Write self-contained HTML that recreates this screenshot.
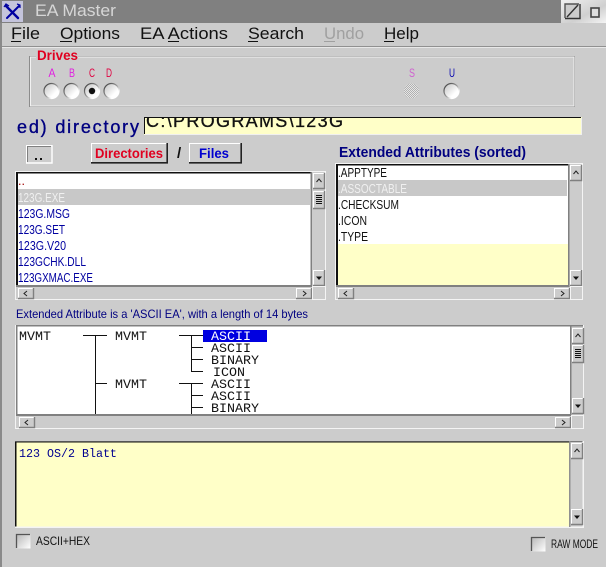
<!DOCTYPE html>
<html><head><meta charset="utf-8"><title>EA Master</title>
<style>
html,body{margin:0;padding:0;background:#ccc;width:606px;height:567px;overflow:hidden}
svg{display:block}
text{font-family:"Liberation Sans",sans-serif;white-space:pre}
text.m,.m text{font-family:"Liberation Mono",monospace}
</style></head><body>
<svg xmlns="http://www.w3.org/2000/svg" width="606" height="567" viewBox="0 0 606 567">
<defs>
<linearGradient id="r" x1="0" y1="0" x2="1" y2="1"><stop offset="0" stop-color="#c0c0c0"/><stop offset=".7" stop-color="#fff"/><stop offset="1" stop-color="#fff"/></linearGradient>
<linearGradient id="ring" x1="0" y1="0" x2="1" y2="1"><stop offset="0" stop-color="#333"/><stop offset=".5" stop-color="#999"/><stop offset=".75" stop-color="#fff"/><stop offset="1" stop-color="#fff"/></linearGradient>
<linearGradient id="ck" x1="0" y1="0" x2="1" y2="1"><stop offset="0" stop-color="#b8b8b8"/><stop offset="1" stop-color="#fff"/></linearGradient>
<linearGradient id="tb" x1="0" y1="0" x2="1" y2="1"><stop offset="0" stop-color="#f0f0f0"/><stop offset=".6" stop-color="#d0d0d0"/><stop offset="1" stop-color="#f4f4f4"/></linearGradient>
<pattern id="hat" width="2" height="2" patternUnits="userSpaceOnUse"><rect width="2" height="2" fill="#e6e6e6"/><rect width="1" height="1" fill="#b0b0b0"/><rect x="1" y="1" width="1" height="1" fill="#b0b0b0"/></pattern>
<g id="rad"><circle r="7.5" fill="url(#r)" stroke="url(#ring)" stroke-width="1.2"/></g>
<g id="up"><rect x="0" y="0" width="12" height="16" fill="#ccc"/><path d="M.5 16V.5H12" fill="none" stroke="#fff"/><path d="M0 15.5H11.5V0" fill="none" stroke="#808080" stroke-width="1.4"/><path d="M3.5 9l2.5-3 2.5 3" fill="none" stroke="#222"/></g>
<g id="down"><rect x="0" y="0" width="12" height="16" fill="#ccc"/><path d="M.5 16V.5H12" fill="none" stroke="#fff"/><path d="M0 15.5H11.5V0" fill="none" stroke="#808080" stroke-width="1.4"/><path d="M3 6.5h6l-3 3.5z" fill="#111"/></g>
<g id="lft"><rect width="16" height="11" fill="#ccc"/><path d="M.5 11V.5H16" fill="none" stroke="#fff"/><path d="M0 10.5H15.5V0" fill="none" stroke="#808080" stroke-width="1.4"/><path d="M9 3L6 5.5 9 8" fill="none" stroke="#222"/></g>
<g id="rgt"><rect width="16" height="11" fill="#ccc"/><path d="M.5 11V.5H16" fill="none" stroke="#fff"/><path d="M0 10.5H15.5V0" fill="none" stroke="#808080" stroke-width="1.4"/><path d="M7 3l3 2.5L7 8" fill="none" stroke="#222"/></g>
<g id="thumb"><rect width="12" height="18" fill="#ccc"/><path d="M.5 18V.5H12" fill="none" stroke="#fff"/><path d="M0 17.5H11.5V0" fill="none" stroke="#808080" stroke-width="1.4"/><path d="M3 4.5h6M3 6.5h6M3 8.5h6M3 10.5h6M3 12.5h6" stroke="#111"/></g>
</defs>

<rect width="606" height="567" fill="#ccc"/>
<rect width="2" height="567" fill="#8a8a8a"/>

<!-- title bar -->
<rect width="606" height="23" fill="#808080"/>
<rect x="2" y="1" width="21" height="21" fill="#c4c4dc"/>
<path d="M6 6L18 18" stroke="#0000a0" stroke-width="2.4" stroke-linecap="round"/>
<path d="M19 6L7 18" stroke="#0000a0" stroke-width="2" stroke-linecap="round"/>
<path d="M4 7l2-3 3 2M17 4l3 1 0 3" fill="none" stroke="#0000a0" stroke-width="1.2"/>
<text x="35" y="16" font-size="17" fill="#d6d6d6" textLength="81" lengthAdjust="spacingAndGlyphs">EA Master</text>
<rect x="561" y="0" width="45" height="23" fill="url(#tb)"/>
<rect x="565" y="4" width="14" height="14" fill="#ccc"/>
<path d="M565 18V4H579" fill="none" stroke="#555" stroke-width="1.4"/>
<path d="M565 18.5H580V4" fill="none" stroke="#333" stroke-width="1.4"/>
<path d="M567 17L578 5" stroke="#333" stroke-width="1.4"/>
<rect x="591" y="8" width="8" height="9" fill="#ddd" stroke="#444" stroke-width="1.6"/>

<!-- menu -->
<g font-size="17" fill="#111">
<text x="11" y="39" textLength="29" lengthAdjust="spacingAndGlyphs">File</text>
<text x="60" y="39" textLength="60" lengthAdjust="spacingAndGlyphs">Options</text>
<text x="140" y="39" textLength="88" lengthAdjust="spacingAndGlyphs">EA Actions</text>
<text x="248" y="39" textLength="56" lengthAdjust="spacingAndGlyphs">Search</text>
<text x="324" y="39" textLength="40" lengthAdjust="spacingAndGlyphs" fill="#a0a0a0">Undo</text>
<text x="384" y="39" textLength="35" lengthAdjust="spacingAndGlyphs">Help</text>
</g>
<g fill="#111">
<rect x="11" y="41" width="10" height="1"/><rect x="60" y="41" width="12" height="1"/><rect x="168" y="41" width="11" height="1"/><rect x="248" y="41" width="10" height="1"/><rect x="384" y="41" width="10" height="1"/>
<rect x="324" y="41" width="11" height="1" fill="#a0a0a0"/>
</g>
<rect x="2" y="46" width="604" height="1" fill="#909090"/>
<rect x="2" y="47" width="604" height="1" fill="#e8e8e8"/>

<!-- drives -->
<rect x="29.5" y="56.5" width="545" height="50" fill="none" stroke="#8c8c8c"/>
<rect x="30.5" y="57" width="543.5" height="49" fill="none" stroke="#f2f2f2"/>
<rect x="36" y="50" width="42" height="12" fill="#ccc"/>
<text x="37" y="60" font-size="14" font-weight="bold" fill="#e00020" textLength="41" lengthAdjust="spacingAndGlyphs">Drives</text>
<g font-size="12" text-anchor="middle">
<text x="52" y="77" fill="#e020e0" textLength="7" lengthAdjust="spacingAndGlyphs">A</text>
<text x="72" y="77" fill="#e020e0" textLength="6" lengthAdjust="spacingAndGlyphs">B</text>
<text x="92" y="77" fill="#e00040" textLength="6" lengthAdjust="spacingAndGlyphs">C</text>
<text x="109" y="77" fill="#e00040" textLength="6" lengthAdjust="spacingAndGlyphs">D</text>
<text x="412" y="77" fill="#d060d0" textLength="6" lengthAdjust="spacingAndGlyphs">S</text>
<text x="452" y="77" fill="#0000b0" textLength="6" lengthAdjust="spacingAndGlyphs">U</text>
</g>
<use href="#rad" x="51.5" y="91"/><use href="#rad" x="71.5" y="91"/><use href="#rad" x="92" y="91"/><use href="#rad" x="111.5" y="91"/><use href="#rad" x="451.5" y="91"/>
<circle cx="92" cy="91" r="3.2" fill="#111"/>
<circle cx="411.5" cy="91" r="7.5" fill="url(#hat)"/>

<!-- directory -->
<text x="17" y="133" font-size="18" fill="#000080" stroke="#000080" stroke-width=".35" textLength="122" lengthAdjust="spacing">ed) directory</text>
<svg x="144" y="117" width="438" height="18" viewBox="0 0 438 18">
<rect x="0" y="0" width="438" height="18" fill="#ffffc8"/>
<text x="2" y="10" font-size="18" fill="#111" stroke="#111" stroke-width=".3" textLength="197" lengthAdjust="spacing">C:\PROGRAMS\123G</text>
</svg>
<path d="M144.5 134V117.5H581" fill="none" stroke="#111"/>
<path d="M145 134.5H581.5V118" fill="none" stroke="#f0f0f0"/>

<!-- buttons -->
<rect x="26" y="145" width="26" height="18" fill="#ccc"/>
<path d="M26.5 163V145.5H52" fill="none" stroke="#fff"/><path d="M26 163H52V145" fill="none" stroke="#fff" stroke-width="1.4"/>
<path d="M27.5 162V146.5H51" fill="none" stroke="#808080"/>
<rect x="35" y="158" width="2" height="2" fill="#111"/><rect x="40" y="158" width="2" height="2" fill="#111"/>
<rect x="91" y="143" width="76" height="20" fill="#ccc"/>
<path d="M91.5 163V143.5H167" fill="none" stroke="#fff"/><path d="M91 162.8H167.2V143" fill="none" stroke="#222" stroke-width="1.6"/>
<text x="95" y="158" font-size="14" font-weight="bold" fill="#e00020" textLength="68" lengthAdjust="spacingAndGlyphs">Directories</text>
<text x="177" y="158" font-size="15" font-weight="bold" fill="#111">/</text>
<rect x="189" y="143" width="52" height="20" fill="#ccc"/>
<path d="M189.5 163V143.5H241" fill="none" stroke="#fff"/><path d="M189 162.8H241.2V143" fill="none" stroke="#222" stroke-width="1.6"/>
<text x="199" y="158" font-size="14" font-weight="bold" fill="#0000d0" textLength="30" lengthAdjust="spacingAndGlyphs">Files</text>
<text x="339" y="157" font-size="14.5" font-weight="bold" fill="#000080" textLength="187" lengthAdjust="spacingAndGlyphs">Extended Attributes (sorted)</text>

<!-- left list -->
<rect x="15.5" y="171.5" width="310" height="128" fill="#ccc" stroke="#f4f4f4"/>
<rect x="16" y="172" width="296" height="115" fill="#fff"/>
<rect x="16" y="172" width="296" height="1.5" fill="#111"/><rect x="16" y="172" width="2" height="115" fill="#111"/>
<rect x="16" y="285" width="296" height="2" fill="#808080"/><rect x="310.5" y="172" width="1.5" height="115" fill="#808080"/>
<rect x="18" y="189" width="292" height="16" fill="#c8c8c8"/>
<g font-size="12.5" fill="#0000a0">
<text x="18" y="185" fill="#a00000">..</text>
<text x="18" y="202" fill="#f0f0f0" textLength="47" lengthAdjust="spacingAndGlyphs">123G.EXE</text>
<text x="18" y="218" textLength="52" lengthAdjust="spacingAndGlyphs">123G.MSG</text>
<text x="18" y="234" textLength="47" lengthAdjust="spacingAndGlyphs">123G.SET</text>
<text x="18" y="250" textLength="48" lengthAdjust="spacingAndGlyphs">123G.V20</text>
<text x="18" y="266" textLength="68" lengthAdjust="spacingAndGlyphs">123GCHK.DLL</text>
<text x="18" y="282" textLength="75" lengthAdjust="spacingAndGlyphs">123GXMAC.EXE</text>
</g>
<use href="#up" x="313" y="173"/><use href="#thumb" x="313" y="191"/><use href="#down" x="313" y="270"/>
<use href="#lft" x="18" y="288"/><use href="#rgt" x="296" y="288"/>
<rect x="312.5" y="286.5" width="13" height="13" fill="none" stroke="#f4f4f4"/>

<!-- right list -->
<rect x="335.5" y="163.5" width="247" height="136" fill="#ccc" stroke="#f4f4f4"/>
<rect x="336" y="164" width="233" height="123" fill="#fff"/>
<rect x="338" y="244" width="231" height="41" fill="#ffffc8"/>
<rect x="336" y="164" width="233" height="1.5" fill="#111"/><rect x="336" y="164" width="2" height="123" fill="#111"/>
<rect x="336" y="285" width="233" height="2" fill="#808080"/><rect x="568" y="164" width="1.5" height="123" fill="#808080"/>
<rect x="338" y="180" width="229" height="16" fill="#c8c8c8"/>
<g font-size="12.5" fill="#111">
<text x="338" y="177" textLength="49" lengthAdjust="spacingAndGlyphs">.APPTYPE</text>
<text x="338" y="193" fill="#f0f0f0" textLength="69" lengthAdjust="spacingAndGlyphs">.ASSOCTABLE</text>
<text x="338" y="209" textLength="61" lengthAdjust="spacingAndGlyphs">.CHECKSUM</text>
<text x="338" y="225" textLength="29" lengthAdjust="spacingAndGlyphs">.ICON</text>
<text x="338" y="241" textLength="30" lengthAdjust="spacingAndGlyphs">.TYPE</text>
</g>
<use href="#up" x="570" y="165"/><use href="#down" x="570" y="270"/>
<use href="#lft" x="338" y="288"/><use href="#rgt" x="554" y="288"/>
<rect x="570.5" y="286.5" width="12" height="13" fill="none" stroke="#f4f4f4"/>

<!-- info line -->
<text x="16" y="318" font-size="12" fill="#000080" textLength="292" lengthAdjust="spacingAndGlyphs">Extended Attribute is a 'ASCII EA', with a length of 14 bytes</text>

<!-- tree -->
<rect x="15.5" y="325.5" width="568" height="103" fill="#ccc" stroke="#f4f4f4"/>
<rect x="16" y="325" width="555" height="91" fill="#fff"/>
<rect x="16" y="325" width="567" height="1.5" fill="#808080"/><rect x="16" y="325" width="1.5" height="91" fill="#808080"/>
<rect x="16" y="414" width="555" height="2" fill="#808080"/><rect x="570" y="325" width="1.5" height="91" fill="#808080"/>
<rect x="203" y="330" width="64" height="12" fill="#0000e0"/>
<g class="m" font-size="13.33" fill="#111">
<text x="19" y="340">MVMT</text><text x="115" y="340">MVMT</text>
<text x="211" y="340" fill="#fff">ASCII</text>
<text x="211" y="352">ASCII</text><text x="211" y="364">BINARY</text><text x="213" y="376">ICON</text>
<text x="115" y="388">MVMT</text>
<text x="211" y="388">ASCII</text><text x="211" y="400">ASCII</text><text x="211" y="412">BINARY</text>
</g>
<g stroke="#111" fill="none">
<path d="M83 335.5H107M95.5 335.5V414M95 383.5H107"/>
<path d="M179 335.5H203M191.5 335.5V371.5H203M191 347.5H203M191 359.5H203"/>
<path d="M179 383.5H203M191.5 383.5V414M191 395.5H203M191 407.5H203"/>
</g>
<use href="#lft" x="19" y="417"/><use href="#rgt" x="555" y="417"/>
<use href="#up" x="572" y="328"/><use href="#thumb" x="572" y="345"/><use href="#down" x="572" y="398"/>
<rect x="571.5" y="415.5" width="12" height="13" fill="none" stroke="#f4f4f4"/>

<!-- text box -->
<rect x="15" y="441" width="569" height="87" fill="#ccc"/>
<rect x="15" y="441" width="554" height="86" fill="#ffffc8"/>
<rect x="15" y="441" width="554" height="1.5" fill="#111"/><rect x="15" y="441" width="1.5" height="86" fill="#111"/>
<rect x="15" y="441" width="569" height=".8" fill="#666"/>
<rect x="15" y="526.5" width="569" height="1.5" fill="#f4f4f4"/><rect x="582.5" y="441" width="1.5" height="87" fill="#f4f4f4"/>
<rect x="569" y="441" width="1.5" height="86" fill="#909090"/>
<text x="19" y="457" class="m" font-size="11.67" fill="#000090">123 OS/2 Blatt</text>
<use href="#up" x="571" y="443"/><use href="#down" x="571" y="509"/>

<!-- checkboxes -->
<rect x="16.5" y="534.5" width="14" height="14" fill="url(#ck)"/>
<path d="M16.5 548V534.5H30" fill="none" stroke="#555" stroke-width="1.3"/>
<text x="36" y="545" font-size="12" fill="#111" textLength="54" lengthAdjust="spacingAndGlyphs">ASCII+HEX</text>
<rect x="531.5" y="537.5" width="14" height="14" fill="url(#ck)"/>
<path d="M531.5 551V537.5H545" fill="none" stroke="#555" stroke-width="1.3"/>
<text x="551" y="548" font-size="12" fill="#111" textLength="47" lengthAdjust="spacingAndGlyphs">RAW MODE</text>
</svg>
</body></html>
